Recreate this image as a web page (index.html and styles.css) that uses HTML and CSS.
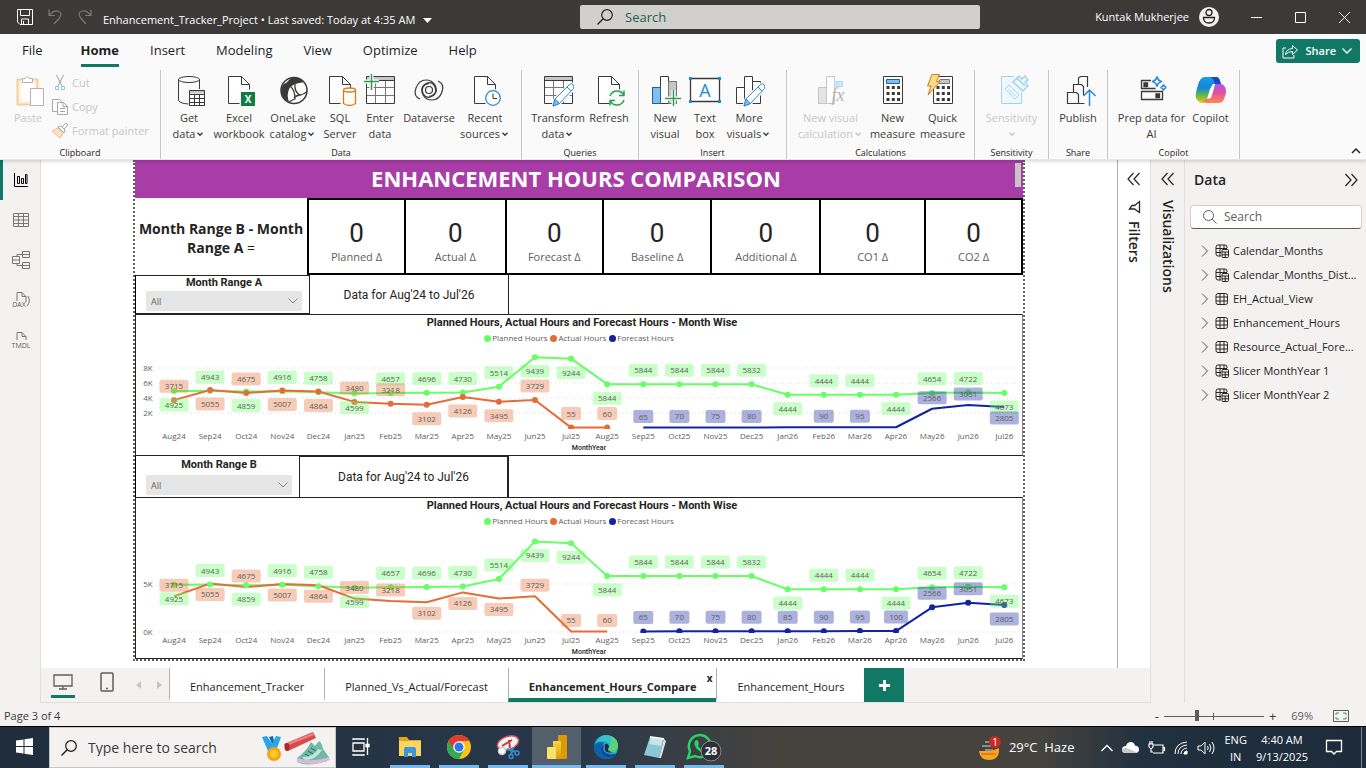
FILE: index.html
```html
<!DOCTYPE html>
<html lang="en">
<head>
<meta charset="utf-8">
<title>Enhancement_Tracker_Project</title>
<link rel="stylesheet" href="styles.css">
</head>
<body>
<svg class="defs" width="0" height="0" aria-hidden="true">
  <defs>
    <symbol id="page" viewBox="0 0 32 32"><path d="M5.500 28.500v-27h13l8 8v5M18.500 1.500v8h8M5.500 28.500h11" fill="#fff" stroke="currentColor"/></symbol>
    <symbol id="grid" viewBox="0 0 32 32"><path d="M2.500 1.500h28v27h-28z" fill="#fff"/><path d="M2.500 1.500h28v4h-28z" fill="#c8c6c4"/><path d="M2.500 12.500h28M2.500 20.500h28M11.500 5.500v23M21.500 5.500v23" stroke="#797775"/><path d="M2.500 1.500h28v27h-28zM2.500 5.500h28" fill="none" stroke="#3b3a39"/></symbol>
    <symbol id="pencil" viewBox="0 0 32 32"><path d="M11 31l2-7L27.500 9.500q2-1.500 4 .5t.5 4L17.500 28.500z" fill="#fff" stroke="#fff" stroke-width="3"/><path d="M11 31l2-7L27.500 9.500q2-1.500 3.500 0t.5 4L17.500 28.500z" fill="#fff" stroke="#2b88d8"/><path d="M11 31l2-7 4.500 4.500z" fill="#83beec" stroke="#2b88d8"/><path d="M25 12l4 4" stroke="#2b88d8"/></symbol>
    <symbol id="bars" viewBox="0 0 32 32"><path d="M3.500 12.500h8v16h-8zM19.500 6.500h8v22h-8z" fill="#fff" stroke="currentColor"/><path d="M11.500 1.500h8v27h-8z" fill="#fff" stroke="currentColor"/></symbol>
    <symbol id="calc" viewBox="0 0 32 32"><path d="M6.500 1.500h19v27h-19z" fill="#fff" stroke="#3b3a39"/><path d="M9.500 12.500h14M9.500 18.500h14M9.500 24.500h14" stroke="#3b3a39" stroke-width="3" stroke-dasharray="3 2.300"/></symbol>
    <symbol id="chev" viewBox="0 0 10 10"><path d="M2.500 3.800l2.500 2.500 2.500-2.500" fill="none" stroke="currentColor" stroke-width="1.400"/></symbol>
    <symbol id="lens" viewBox="0 0 18 18"><circle cx="11" cy="7" r="5.300" fill="none" stroke="currentColor" stroke-width="1.200"/><path d="M7.200 10.800L1.500 16.500" stroke="currentColor" stroke-width="1.300"/></symbol>
    <symbol id="table" viewBox="0 0 14 14"><rect x="1" y="1.500" width="11.500" height="11" rx="2" fill="none" stroke="#252423"/><path d="M1 5h11.500M1 9h11.500M5 1.500v11M9 1.500v11" stroke="#252423"/></symbol>
    <symbol id="calctable" viewBox="0 0 14 14"><path d="M6 12H3Q1 12 1 10V3q0-2 2-2h7q2 0 2 2v1M1 4.500h11M1 8.500h5M5 1v11M9 1v4" fill="none" stroke="#252423"/><rect x="7" y="5.500" width="6.500" height="8" rx="1" fill="#f3f2f1" stroke="#252423"/><path d="M7 8h6.500M7 10.800h6.500M10.200 8v5.500" stroke="#252423"/></symbol>
    <symbol id="go" viewBox="0 0 8 14"><path d="M1 1.500l5.500 5.500L1 12.500" fill="none" stroke="#605e5c"/></symbol>
    <symbol id="dblleft" viewBox="0 0 14 14"><path d="M6.500 1L1 7l5.500 6M12.500 1L7 7l5.500 6" fill="none" stroke="#252423" stroke-width="1.200"/></symbol>
    <linearGradient id="cpA" x1="0" y1="0" x2="0" y2="1"><stop offset="0" stop-color="#1a9bf0"/><stop offset=".4" stop-color="#1186d6"/><stop offset=".7" stop-color="#5fb84a"/><stop offset="1" stop-color="#f5c60b"/></linearGradient>
    <linearGradient id="cpB" x1="0" y1="0" x2="0" y2="1"><stop offset="0" stop-color="#9b5cf0"/><stop offset=".5" stop-color="#e4509c"/><stop offset="1" stop-color="#fb8a4c"/></linearGradient>
    <linearGradient id="edg" x1="0" y1="1" x2="1" y2="0"><stop offset="0" stop-color="#0c59a4"/><stop offset=".5" stop-color="#1b9de2"/><stop offset="1" stop-color="#5bd65a"/></linearGradient>
    <linearGradient id="pbi" x1="0" y1="0" x2="0" y2="1"><stop offset="0" stop-color="#f8d648"/><stop offset="1" stop-color="#dd9a06"/></linearGradient>
  </defs>
</svg>

<header class="titlebar">
  <div class="title-left">
    <button class="bare" aria-label="Save"><svg width="16" height="16" viewBox="0 0 16 16" fill="none" stroke="#fff"><path d="M.5.5h15v15H3l-2.500-2.500zM3.500.5v6h9v-6M4.500 15v-5h7v5M6.500 12v3"/></svg></button>
    <button class="bare" aria-label="Undo"><svg width="16" height="16" viewBox="0 0 16 16" fill="none" stroke="#7b7977" stroke-width="1.200"><path d="M2 .5v6h6M2.500 6Q7 .8 11.500 2.300T12 9.500L7 15"/></svg></button>
    <button class="bare" aria-label="Redo"><svg width="16" height="16" viewBox="0 0 16 16" fill="none" stroke="#7b7977" stroke-width="1.200"><path d="M14 .5v6H8M13.500 6Q9 .8 4.500 2.300T4 9.500L9 15"/></svg></button>
    <button class="bare doc-name">Enhancement_Tracker_Project • Last saved: Today at 4:35 AM <svg width="9" height="5" viewBox="0 0 9 5"><path d="M0 0h9L4.500 5z" fill="#fff"/></svg></button>
  </div>
  <label class="top-search"><svg width="18" height="18"><use href="#lens"/></svg><input type="text" placeholder="Search" aria-label="Search"></label>
  <div class="title-right">
    <button class="bare user">Kuntak Mukherjee <svg width="20" height="20" viewBox="0 0 20 20"><circle cx="10" cy="10" r="10" fill="#f3f2f1"/><circle cx="10" cy="5.500" r="3" fill="none" stroke="#201f1e" stroke-width="1.300"/><path d="M4.500 10.500h11q0 5.500-5.500 5.500t-5.500-5.500z" fill="none" stroke="#201f1e" stroke-width="1.300"/></svg></button>
    <button class="bare win" aria-label="Minimize"><svg width="11" height="11"><path d="M0 5.500h11" stroke="#fff"/></svg></button>
    <button class="bare win" aria-label="Maximize"><svg width="11" height="11"><path d="M.5.500h10v10H.5z" fill="none" stroke="#fff"/></svg></button>
    <button class="bare win" aria-label="Close"><svg width="11" height="11"><path d="M0 0l11 11M11 0L0 11" stroke="#fff"/></svg></button>
  </div>
</header>

<nav class="menubar">
  <button class="menu file">File</button><button class="menu current">Home</button><button class="menu">Insert</button><button class="menu">Modeling</button><button class="menu">View</button><button class="menu">Optimize</button><button class="menu">Help</button>
  <button class="share"><svg width="17" height="15" viewBox="0 0 17 15" fill="none" stroke="#fff"><path d="M4 4H1v10h11v-3M3.500 10.500Q4 5 10.500 4.500v-3l5 4.500-5 4.500v-3Q6 7.500 3.500 10.500z"/></svg>Share<svg width="10" height="6" viewBox="0 0 10 6"><path d="M.5.5L5 5 9.500.5" fill="none" stroke="#fff" stroke-width="1.300"/></svg></button>
</nav>

<section class="ribbon" aria-label="Home ribbon">
  <div class="group">
    <div class="tools clip">
      <button class="tool s36 off"><svg class="ic" viewBox="0 0 32 32" fill="none"><path d="M5.500 4.500h20v25h-20z" fill="#fdf3dd" stroke="#f3cf9d" stroke-width="2"/><path d="M9 8h13v18H9z" fill="#fff"/><path d="M10.500 7.500v-4h3q2-4 4 0h3v4z" fill="#fff" stroke="#b5b3b1"/><path d="M18.500 13.500h13v17h-13z" fill="#fff" stroke="#b5b3b1"/></svg><span>Paste</span></button>
      <div class="small-tools">
        <button class="mini"><svg width="16" height="16" viewBox="0 0 16 16" fill="none"><path d="M4.500 0l5.500 11M11.500 0L6 11" stroke="#a19f9d"/><path d="M3.500 11.500h3v3h-3zM9.500 11.500h3v3h-3z" stroke="#8ec5e8"/></svg>Cut</button>
        <button class="mini"><svg width="16" height="16" viewBox="0 0 16 16" fill="#fff" stroke="#a9a7a5"><path d="M.5.500h7l2 2v10h-9z"/><path d="M5.500 3.500h6l4 4v8h-10zM11 3.500v4h4M8 9.500h5M8 12.500h5"/></svg>Copy</button>
        <button class="mini"><svg width="16" height="16" viewBox="0 0 16 16"><path d="M0 8l6-3 5 5-3 5z" fill="#fbe3c8" stroke="#efbd8c"/><path d="M6 4l6 6 1-3-4-4zM10 4l4-4 2 2-4 4" fill="#fff" stroke="#a9a7a5"/></svg>Format painter</button>
      </div>
    </div>
    <div class="group-name">Clipboard</div>
  </div>
  <div class="group">
    <div class="tools lead">
      <button class="tool s50"><svg class="ic" viewBox="0 0 32 32" fill="none" stroke="#3b3a39"><path d="M5.500 4v21.500q2 3 10 3.500M26.500 4v10" /><ellipse cx="16" cy="4.500" rx="10.500" ry="3"/><path d="M16.500 15.500h15v15h-15z" fill="#fff"/><path d="M16.500 17h15" stroke-width="3" stroke="#c8c6c4"/><path d="M16.500 19.500h15M16.500 23.500h15M16.500 27.500h15M21.500 19v12M26.500 19v12M16.500 15.500h15v15h-15z"/></svg><span>Get<br>data<svg class="cv"><use href="#chev"/></svg></span></button>
      <button class="tool s50"><svg class="ic" viewBox="0 0 32 32"><use href="#page"/><path d="M18 17h14v14H18z" fill="#107c41"/><text x="25" y="28" class="xl">X</text></svg><span>Excel<br>workbook</span></button>
      <button class="tool s58"><svg class="ic" viewBox="0 0 32 32"><circle cx="17" cy="15.500" r="13" fill="#fff" stroke="#3b3a39" stroke-width="1.500"/><path d="M14 3l8 0 5 4-9 2-5 3q-4 8-1 15Q4 24 4 15 5 9 9 8z" fill="#3b3a39"/><path d="M13 11q5 4 5 13-3 1-6 3M18 9q-1 8 5 11-5 1-6 3M23 20q5-1 7-4" fill="none" stroke="#3b3a39" stroke-width="1.300"/></svg><span>OneLake<br>catalog<svg class="cv"><use href="#chev"/></svg></span></button>
      <button class="tool s36"><svg class="ic" viewBox="0 0 32 32"><use href="#page"/><path d="M19.500 15v13.500q6 4 12 0V15" fill="#fff" stroke="#d87a16" stroke-width="1.300"/><ellipse cx="25.500" cy="15" rx="6" ry="2" fill="#fff" stroke="#d87a16" stroke-width="1.300"/></svg><span>SQL<br>Server</span></button>
      <button class="tool s44"><svg class="ic" viewBox="0 0 32 32"><use href="#grid"/><path d="M0 6.500h15M7.500-1v16" stroke="#fff" stroke-width="4"/><path d="M0 6.500h15M7.500-1v16" stroke="#2f9e4f" stroke-width="1.500"/></svg><span>Enter<br>data</span></button>
      <button class="tool s54"><svg class="ic" viewBox="0 0 32 32" fill="none" stroke="#3b3a39" stroke-width="1.200"><circle cx="16" cy="15" r="3.500"/><path d="M7 24Q0 21 3 13 6 5 13 5q6 0 9 5 3 6-1 10-5 4-9 1-4-4-2-9 2-3 6-3.500"/><path d="M25 6q7 3 4 11-3 8-10 8-6 0-9-5-3-6 1-10 5-4 9-1 4 4 2 9-2 3-6 3.500"/></svg><span>Dataverse</span></button>
      <button class="tool s58"><svg class="ic" viewBox="0 0 32 32"><use href="#page"/><circle cx="24" cy="23" r="9" fill="#fafafa"/><circle cx="24" cy="23" r="7.300" fill="#fff" stroke="#2b88d8" stroke-width="1.300"/><path d="M24 18.500v5h4" fill="none" stroke="#3b3a39"/></svg><span>Recent<br>sources<svg class="cv"><use href="#chev"/></svg></span></button>
    </div>
    <div class="group-name">Data</div>
  </div>
  <div class="group">
    <div class="tools">
      <button class="tool s58"><svg class="ic" viewBox="0 0 32 32"><use href="#grid"/><use href="#pencil"/></svg><span>Transform<br>data<svg class="cv"><use href="#chev"/></svg></span></button>
      <button class="tool s44"><svg class="ic" viewBox="0 0 32 32"><use href="#page"/><circle cx="24" cy="23" r="9" fill="#fafafa"/><path d="M17 21q2-5 7-5 5 0 6.500 4M31 15.500v5h-5M31 25q-2 5-7 5-5 0-6.500-4M17 30.500v-5h5" fill="none" stroke="#2f9e4f" stroke-width="1.500"/></svg><span>Refresh</span></button>
    </div>
    <div class="group-name">Queries</div>
  </div>
  <div class="group">
    <div class="tools lead wider">
      <button class="tool s36"><svg class="ic" viewBox="0 0 32 32"><use href="#bars"/><path d="M3.500 12.500h8v16h-8z" fill="#83beec" stroke="#1664a7"/><path d="M19.500 6.500h8v22h-8z" fill="#c8c6c4" stroke="#797775"/><path d="M16 23.500h16M24.500 15v16" stroke="#fff" stroke-width="4"/><path d="M16 23.500h16M24.500 15v16" stroke="#2f9e4f" stroke-width="1.500"/></svg><span>New<br>visual</span></button>
      <button class="tool s44"><svg class="ic" viewBox="0 0 32 32"><path d="M1.500 3.500h29v23h-29z" fill="#fff" stroke="#3b3a39" stroke-width="1.300"/><path d="M0 2h3v3H0zM29 2h3v3h-3zM0 25h3v3H0zM29 25h3v3h-3z" fill="#1e88d2"/><text x="16" y="22" class="tb">A</text></svg><span>Text<br>box</span></button>
      <button class="tool s44"><svg class="ic" viewBox="0 0 32 32"><use href="#bars"/><use href="#pencil"/></svg><span>More<br>visuals<svg class="cv"><use href="#chev"/></svg></span></button>
    </div>
    <div class="group-name">Insert</div>
  </div>
  <div class="group">
    <div class="tools">
      <button class="tool s70 off"><svg class="ic" viewBox="0 0 32 32"><use href="#bars"/><path d="M3.500 12.500h8v16h-8z" fill="#e6e4e2" stroke="#c8c6c4"/><path d="M19.500 6.500h8v5h-8z" fill="#cde6f7" stroke="#b5d9f0"/><path d="M20 12h10v18H20z" fill="#fafafa"/><text x="23" y="26" class="fx">fx</text></svg><span>New visual<br>calculation<svg class="cv"><use href="#chev"/></svg></span></button>
      <button class="tool s50"><svg class="ic" viewBox="0 0 32 32"><use href="#calc"/><path d="M9.500 4.500h13v4h-13z" fill="#83beec" stroke="#1664a7"/></svg><span>New<br>measure</span></button>
      <button class="tool s50"><svg class="ic" viewBox="0 0 32 32"><use href="#calc"/><path d="M13 4.500h9.500v4H11z" fill="#c8c6c4" stroke="#797775"/><path d="M5-.5h7.500l-3 7H13L1 20l3-9H.5z" fill="#fbd98d" stroke="#d87a16"/></svg><span>Quick<br>measure</span></button>
    </div>
    <div class="group-name">Calculations</div>
  </div>
  <div class="group">
    <div class="tools">
      <button class="tool s58 off"><svg class="ic" viewBox="0 0 32 32" fill="#eef7fc" stroke="#a6d2ea"><path d="M18 1.500H5.500v27h20V17"/><path d="M9 14l4-4 10 10-4 4zM12.500 14l7 7"/><path d="M17 7l6-6 3 3 3-3 3 4-3 2 3 4-5 5zM21 3l8 8" stroke-width="1.500"/></svg><span>Sensitivity<br><svg class="cv"><use href="#chev"/></svg></span></button>
    </div>
    <div class="group-name">Sensitivity</div>
  </div>
  <div class="group">
    <div class="tools">
      <button class="tool s44"><svg class="ic" viewBox="0 0 32 32" fill="none" stroke="#3b3a39" stroke-width="1.200"><path d="M6.500 17.500h8l2 2v9h-11v-11zM11.500 17V9.500h8l2 2V20M16.500 9V3l2-1.500h7V12M16.500 28.500h6"/><path d="M27.500 31V15M21.500 21l6-6 6 6" stroke="#2b88d8" stroke-width="1.500"/></svg><span>Publish</span></button>
    </div>
    <div class="group-name">Share</div>
  </div>
  <div class="group">
    <div class="tools">
      <button class="tool s70"><svg class="ic" viewBox="0 0 32 32" fill="none" stroke="#3b3a39" stroke-width="1.300"><path d="M15 5.500H5.500v8h14M5.500 16.500h21v8h-21z"/><path d="M8 8h3.500v3.500H8zM20 19h3.500v3.500H20z" fill="#3b3a39"/><path d="M21 1.500q1 4.500 5 5-4 .5-5 5-1-4.500-5-5 4-.5 5-5zM27.500 9.500q.5 2.500 3 3-2.500.5-3 3-.5-2.500-3-3 2.500-.5 3-3z" stroke="#2b88d8" stroke-width="1.500"/></svg><span>Prep data for<br>AI</span></button>
      <button class="tool s44"><svg class="ic" viewBox="0 0 32 32"><path d="M21 2q3 0 4 4l1 3h-6q-3 0-4 4l-3 10q-1 5-5 5-5 0-7-5Q0 19 3 10 5 2 10 2z" fill="url(#cpA)"/><path d="M11 28q-2 0-3-3 5 0 6-5l3-9q1-3 4-3 9 0 10 7 .5 4-2 9-1 4-6 4z" fill="url(#cpB)"/><path d="M16 2h5q3 0 4 4l1 3h-6l-2-5z" fill="#1a47c8"/><path d="M15 14l3-5 2 0-2 8-2 6-4 1z" fill="#fff"/></svg><span>Copilot</span></button>
    </div>
    <div class="group-name">Copilot</div>
  </div>
  <button class="bare collapse" aria-label="Collapse ribbon"><svg width="10" height="6" viewBox="0 0 10 6"><path d="M1 5l4-4 4 4" fill="none" stroke="#252423" stroke-width="1.500"/></svg></button>
</section>

<main class="workspace">
  <nav class="views">
    <button class="view on" aria-label="Report view"><svg width="16" height="16" viewBox="0 0 16 16" fill="none" stroke="#000"><path d="M1.500 1v13.500H15M4.500 4.500h2v7h-2zM8.500 6.500h2v5h-2zM12.500 2.500h1.500v9h-1.500z"/></svg></button>
    <button class="view" aria-label="Table view"><svg width="16" height="16" viewBox="0 0 16 16" fill="none" stroke="#797775"><path d="M.5 1.500h15v13H.5zM.5 4.500h15M.5 8h15M.5 11.500h15M5.500 1.500v13M10.500 1.500v13"/></svg></button>
    <button class="view" aria-label="Model view"><svg width="18" height="18" viewBox="0 0 18 18" fill="none" stroke="#797775"><path d="M.5 5.500h7v7h-7zM.5 9h7M10.500.5h7v6h-7zM10.500 3.500h7M10.500 11.500h7v6h-7zM10.500 14.500h7M5 5.500v-2h5.500M5 12.500v2h5.500"/></svg></button>
    <button class="view" aria-label="DAX query view"><svg width="20" height="18" viewBox="0 0 20 18" fill="none" stroke="#797775"><path d="M6 10V1.500h5l4 4V11M11 1.500v4h4M17 5q3 5-1 10"/><text x="8" y="16" class="nav-t">DAX</text></svg></button>
    <button class="view" aria-label="TMDL view"><svg width="20" height="18" viewBox="0 0 20 18" fill="none" stroke="#797775"><path d="M6 9V1.500h5l4 4V9M11 1.500v4h4"/><text x="10" y="17" class="nav-t">TMDL</text></svg></button>
  </nav>

  <div class="center">
    <div class="stage">
      <div class="canvas">
        <article class="report">
          <h1 class="banner">ENHANCEMENT HOURS COMPARISON<span class="thumb"></span></h1>
          <div class="cards">
            <p class="cards-title">Month Range B - Month Range A <span class="eq">=</span></p>
            <div class="card c96"><b>0</b><span>Planned Δ</span></div>
            <div class="card c100"><b>0</b><span>Actual Δ</span></div>
            <div class="card c96"><b>0</b><span>Forecast Δ</span></div>
            <div class="card c108"><b>0</b><span>Baseline Δ</span></div>
            <div class="card c108"><b>0</b><span>Additional Δ</span></div>
            <div class="card c104"><b>0</b><span>CO1 Δ</span></div>
            <div class="card c96"><b>0</b><span>CO2 Δ</span></div>
          </div>
          <div class="slicers">
            <div class="slicer"><label for="ra">Month Range A</label><span class="pick"><select id="ra"><option>All</option></select><svg width="10" height="6" viewBox="0 0 10 6"><path d="M.5.5L5 5 9.500.5" fill="none" stroke="#8a8886"/></svg></span></div>
            <p class="range">Data for Aug'24 to Jul'26</p>
          </div>
          <figure class="chart">
            <figcaption>Planned Hours, Actual Hours and Forecast Hours - Month Wise</figcaption>
            <div class="legend"><span class="k planned">Planned Hours</span><span class="k actual">Actual Hours</span><span class="k forecast">Forecast Hours</span></div>
            <svg class="plot" id="plotA" viewBox="0 0 886 110"></svg>
          </figure>
          <div class="slicers tall">
            <div class="slicer"><label for="rb">Month Range B</label><span class="pick"><select id="rb"><option>All</option></select><svg width="10" height="6" viewBox="0 0 10 6"><path d="M.5.5L5 5 9.500.5" fill="none" stroke="#8a8886"/></svg></span></div>
            <p class="range">Data for Aug'24 to Jul'26</p>
          </div>
          <figure class="chart">
            <figcaption>Planned Hours, Actual Hours and Forecast Hours - Month Wise</figcaption>
            <div class="legend"><span class="k planned">Planned Hours</span><span class="k actual">Actual Hours</span><span class="k forecast">Forecast Hours</span></div>
            <svg class="plot" id="plotB" viewBox="0 0 886 130"></svg>
          </figure>
        </article>
      </div>
      <aside class="rail filters">
        <button class="bare" aria-label="Expand filters"><svg width="14" height="14"><use href="#dblleft"/></svg></button>
        <svg class="funnel" width="13" height="12" viewBox="0 0 13 12"><path d="M11.500.5v11L6.500 8H1.500L4 4.500H6.500z" fill="none" stroke="#252423" stroke-width="1.300"/></svg>
        <h2>Filters</h2>
      </aside>
    </div>
    <div class="pages">
      <button class="device on" aria-label="Desktop layout"><svg width="20" height="16" viewBox="0 0 20 16" fill="none" stroke="#605e5c" stroke-width="1.300"><path d="M1 1h18v11H1zM10 12v3M6 15h8"/></svg></button>
      <button class="device" aria-label="Mobile layout"><svg width="14" height="20" viewBox="0 0 14 20" fill="none" stroke="#605e5c" stroke-width="1.500"><rect x="1" y="1" width="12" height="18" rx="1"/><path d="M6 16.500h2"/></svg></button>
      <button class="bare step" aria-label="Previous"><svg width="6" height="8"><path d="M5 0v8L0 4z" fill="#c8c6c4"/></svg></button>
      <button class="bare step" aria-label="Next"><svg width="6" height="8"><path d="M1 0v8l5-4z" fill="#c8c6c4"/></svg></button>
      <button class="tab">Enhancement_Tracker</button>
      <button class="tab">Planned_Vs_Actual/Forecast</button>
      <button class="tab active">Enhancement_Hours_Compare<span class="x">x</span></button>
      <button class="tab">Enhancement_Hours</button>
      <button class="add" aria-label="New page"><svg width="11" height="11"><path d="M5.500 0v11M0 5.500h11" stroke="#fff" stroke-width="3"/></svg></button>
    </div>
  </div>

  <aside class="rail visuals">
    <button class="bare" aria-label="Expand visualizations"><svg width="14" height="14"><use href="#dblleft"/></svg></button>
    <h2>Visualizations</h2>
  </aside>

  <aside class="data">
    <div class="data-head"><h2>Data</h2><button class="bare" aria-label="Collapse data"><svg width="14" height="14" class="flip"><use href="#dblleft"/></svg></button></div>
    <label class="data-search"><svg width="16" height="16" viewBox="0 0 16 16" fill="none" stroke="#605e5c"><circle cx="6.500" cy="6.500" r="5"/><path d="M10 10l4.500 4.500"/></svg><input type="text" placeholder="Search" aria-label="Search data"></label>
    <ul class="tree">
      <li><svg width="8" height="14"><use href="#go"/></svg><svg width="14" height="14"><use href="#calctable"/></svg>Calendar_Months</li>
      <li><svg width="8" height="14"><use href="#go"/></svg><svg width="14" height="14"><use href="#calctable"/></svg>Calendar_Months_Dist...</li>
      <li><svg width="8" height="14"><use href="#go"/></svg><svg width="14" height="14"><use href="#table"/></svg>EH_Actual_View</li>
      <li><svg width="8" height="14"><use href="#go"/></svg><svg width="14" height="14"><use href="#table"/></svg>Enhancement_Hours</li>
      <li><svg width="8" height="14"><use href="#go"/></svg><svg width="14" height="14"><use href="#table"/></svg>Resource_Actual_Fore...</li>
      <li><svg width="8" height="14"><use href="#go"/></svg><svg width="14" height="14"><use href="#calctable"/></svg>Slicer MonthYear 1</li>
      <li><svg width="8" height="14"><use href="#go"/></svg><svg width="14" height="14"><use href="#calctable"/></svg>Slicer MonthYear 2</li>
    </ul>
  </aside>
</main>

<footer class="status">
  <span>Page 3 of 4</span>
  <div class="zoom">
    <button class="bare">-</button><input type="range" min="0" max="100" value="32" aria-label="Zoom"><button class="bare">+</button><span class="pct">69%</span>
    <button class="bare" aria-label="Fit to page"><svg width="16" height="12" viewBox="0 0 16 12" fill="none"><path d="M.5.5h15v11H.5z" stroke="#605e5c"/><path d="M3 5V3h3M10 3h3v2M13 7v2h-3M6 9H3V7" stroke="#4b9a4b"/></svg></button>
  </div>
</footer>

<div class="taskbar">
  <button class="slot" aria-label="Start"><svg width="17" height="17" viewBox="0 0 17 17" fill="#fff"><path d="M0 2.500L7.500 1.500V8H0zM8.500 1.300L17 0v8H8.500zM0 9h7.500v6.500L0 14.500zM8.500 9H17v8l-8.500-1.300z"/></svg></button>
  <label class="task-search"><svg width="18" height="18"><use href="#lens"/></svg><input type="text" placeholder="Type here to search" aria-label="Type here to search">
    <svg width="70" height="34" viewBox="0 0 70 34"><path d="M1 6l5-1 5 8 4-8 5 1-5 14H7z" fill="#2aa5ea"/><path d="M8 6l3 7 2-3-1-5z" fill="#0b6fc0"/><circle cx="13" cy="23" r="7" fill="#f6a50d"/><circle cx="13" cy="23" r="4" fill="#fcc736"/><path d="M23 13L52 1l3 6-28 13z" fill="#d94a49"/><path d="M24 13l28-11 1 2-28 11z" fill="#ef8583"/><ellipse cx="26" cy="16" rx="2.500" ry="4" fill="#a62c33"/><path d="M36 27q9-6 14-16l4 4 4-5q3 2 4 8l6 8q1 5-7 5-14 5-25 0z" fill="#6db9a6"/><path d="M41 26q10 1 16-8l4 1q-6 10-17 10z" fill="#c5e5dc"/><path d="M50 17l5 3M47 20l5 3M44 23l4 2" stroke="#2b6b62"/><path d="M36 27q14 5 32-1l1 3q-15 7-33 2z" fill="#dcb8dd"/></svg>
  </label>
  <button class="slot" aria-label="Task view"><svg width="18" height="18" viewBox="0 0 18 18" fill="none" stroke="#fff" stroke-width="1.300"><path d="M1 5h11v8H1zM1 2V1h11v1M1 16v1h11v-1M15.500 0v6M15.500 9v8"/><path d="M14 6.500h3v2h-3z" fill="#fff"/></svg></button>
  <button class="slot open" aria-label="File Explorer"><svg width="24" height="22" viewBox="0 0 24 22"><path d="M1 1h8l2 3h12v16H1z" fill="#e8a317"/><path d="M1 5h22v15H1z" fill="#fcd462"/><path d="M6 21v-8q0-2 2-2h8q2 0 2 2v8h-4v-4h-4v4z" fill="#3a96dd"/></svg></button>
  <button class="slot open" aria-label="Chrome"><svg width="24" height="24" viewBox="0 0 24 24"><circle cx="12" cy="12" r="12" fill="#fbc116"/><path d="M12 12L1.600 6A12 12 0 0 0 12 24l5-9z" fill="#34a853"/><path d="M1.600 6A12 12 0 0 1 22.400 6H12v6H5z" fill="#e33b2e"/><circle cx="12" cy="12" r="5.800" fill="#fff"/><circle cx="12" cy="12" r="4.500" fill="#3374e8"/></svg></button>
  <button class="slot open" aria-label="Snipping Tool"><svg width="24" height="24" viewBox="0 0 24 24"><ellipse cx="12" cy="8" rx="11" ry="6.500" transform="rotate(-20 12 8)" fill="#f0f0f2" stroke="#d05156" stroke-width="1.500"/><path d="M6 11l10-6M13 5l1 8" stroke="#c53b40" stroke-width="2"/><circle cx="6" cy="16" r="3.500" fill="#fff" stroke="#c7cdd3" stroke-width="1.500"/><path d="M11 14l9 3M17 13l-2 7" stroke="#2d8fd5" stroke-width="2"/><circle cx="21" cy="18" r="2" fill="none" stroke="#2d8fd5" stroke-width="1.500"/><circle cx="15" cy="21.500" r="2" fill="none" stroke="#2d8fd5" stroke-width="1.500"/></svg></button>
  <button class="slot open focus" aria-label="Power BI"><svg width="20" height="24" viewBox="0 0 20 24"><path d="M11 0h8q1 0 1 1v22q0 1-1 1h-8z" fill="#dd9a06"/><path d="M6 6h7q1 0 1 1v17H6z" fill="url(#pbi)"/><path d="M1 12h7q1 0 1 1v11H1q-1 0-1-1V13q0-1 1-1z" fill="#fbe36b"/></svg></button>
  <button class="slot open" aria-label="Edge"><svg width="24" height="24" viewBox="0 0 24 24"><circle cx="12" cy="12" r="12" fill="url(#edg)"/><path d="M0 11Q4 5 10 8q-3 3-1 8 3 5 12 4-4 4-9 4Q1 23 0 11z" fill="#0f5fb0"/><path d="M11 9q-4 5 0 9 4 3 10 1 1 0 0 1-7 4-12-1-4-6 2-10z" fill="#0a3f7d"/><path d="M14 10q1 4-1 6 3 3 8 1l3-5v-2l-5-5z" fill="#5cd27a"/><path d="M11 9q3-1 4 2 0 2-1 3 0 3 5 3-8 2-8-4 0-2 0-4z" fill="#1e2c3b"/><path d="M1 9Q5 0 13 0q9 1 11 9 0 7-7 7-4-1-2-3 2-6-5-7-6 0-9 3z" fill="#38c0cf"/><path d="M17 1q7 3 7 10-1 5-7 5-4-1-2-3 3-5 2-12z" fill="#5cd27a"/></svg></button>
  <button class="slot open" aria-label="Notepad"><svg width="24" height="24" viewBox="0 0 24 24"><path d="M7 2l14 2-5 19-15-3z" fill="#8cc6d8"/><path d="M8 2l12 2-2 7-12-2z" fill="#c4e6ee"/><path d="M21 4l2 2-5 17-2 0z" fill="#e3e3e3"/><path d="M7 2l14 2" stroke="#f3f3f3" stroke-width="2"/></svg></button>
  <button class="slot open" aria-label="WhatsApp"><svg width="36" height="28" viewBox="0 0 36 28"><path d="M2 25l2-7a11 11 0 1 1 5 5z" fill="none" stroke="#28d366" stroke-width="2.500"/><path d="M9 8q2-2 3 0l1 3-1 2q2 3 5 4l2-2 3 2q1 2-2 3-4 1-9-4-4-5-2-8z" fill="#28d366"/><circle cx="25" cy="18" r="10" fill="#2c3138" stroke="#85888c"/><text x="25" y="22" class="badge">28</text></svg></button>
  <div class="tray">
    <button class="bare weather"><svg width="26" height="24" viewBox="0 0 26 24"><path d="M8 6h10M5 10h10M8 14h8" stroke="#8b8b8b" stroke-width="2"/><path d="M2 15h12l8-3q1 12-10 12-9 0-10-9z" fill="#f7a325"/><path d="M4 18h15" stroke="#d97a0a" stroke-width="1.500"/><circle cx="18" cy="6" r="6" fill="#c62a22"/><text x="18" y="10" class="one">1</text></svg><span>29°C&nbsp; Haze</span></button>
    <svg width="12" height="8"><path d="M.5 7L6 1.500 11.500 7" fill="none" stroke="#fff" stroke-width="1.300"/></svg>
    <svg width="17" height="12" viewBox="0 0 17 12"><path d="M4 11q-4 0-4-3.500T4 4q1-4 5-4 3 0 4 3.500 4 .5 4 4T13 11z" fill="#fff"/><path d="M4 11q-4 0-4-3.500 3-3 6-1l9 4-2 .5z" fill="#c8c8c8"/></svg>
    <svg width="17" height="14" viewBox="0 0 17 14" fill="none" stroke="#fff" stroke-width="1.200"><path d="M6 4h9v8H5M15 6.500h1.500v3H15M1 3v3q2 3 4 0V3zM2 3V0M4 3V0M3 8v3h2"/></svg>
    <svg width="14" height="14" viewBox="0 0 14 14" fill="none" stroke="#fff"><path d="M1 13Q1 2 13 1M4 13q0-8 9-9M7 13q0-5 6-6M10 13q0-2 3-3" /><path d="M10 13q0-3 3-3v3z" fill="#fff"/></svg>
    <svg width="18" height="14" viewBox="0 0 18 14" fill="none" stroke="#fff"><path d="M1 5h3l4-4v12L4 9H1zM10.500 5q1.500 2 0 4M12.500 3q3 4 0 8M15 1q4 6 0 12"/></svg>
    <span class="two">ENG<br>IN</span>
    <span class="two">4:40 AM<br>9/13/2025</span>
    <svg width="17" height="17" viewBox="0 0 17 17"><path d="M.5 1.500h15v11h-5L8 15l-2.500-2.500h-5z" fill="none" stroke="#fff" stroke-width="1.300"/></svg>
    <span class="peek"></span>
  </div>
</div>
<script src="charts.js"></script>
</body>
</html>
```

FILE: styles.css
```css
* { box-sizing: border-box; }
body {
  margin: 0; height: 100vh; overflow: hidden;
  display: grid; grid-template-rows: 34px 34px 92px minmax(0, 1fr) 24px 41px;
  font: 12px/16px "Open Sans", "Noto Sans", sans-serif; color: #252423; background: #fff;
}
button, input, select { font: inherit; color: inherit; border: 0; padding: 0; margin: 0; background: none; outline: 0; }
h1, h2, p, ul, figure { margin: 0; padding: 0; }
svg { flex: none; display: block; overflow: visible; }
.defs { position: absolute; }
.bare { display: flex; align-items: center; }

.titlebar { display: grid; grid-template-columns: 290fr 200fr 193fr; background: #3b3a39; color: #fff; }
.title-left { display: flex; align-items: center; padding-left: 17px; gap: 14px; }
.doc-name { gap: 8px; margin-left: -4px; padding-top: 6px; white-space: nowrap; font-size: 11px; }
.top-search { display: flex; align-items: center; margin: 5px 0; background: #d2d0ce; border-radius: 2px; padding-left: 16px; gap: 11px; color: #252423; }
.top-search input { flex: 1; min-width: 0; font-size: 13px; }
.top-search input::placeholder { color: #1f5f52; opacity: 1; }
.title-right { display: flex; justify-content: flex-end; align-items: center; }
.user { gap: 10px; margin-right: 15px; font-size: 11px; }
.win { width: 44px; height: 34px; justify-content: center; }

.menubar { display: flex; align-items: center; gap: 31px; padding: 0 6px 0 22px; background: #fafafa; }
.menu { font-size: 13px; height: 32px; border-bottom: 3px solid transparent; color: #201f1e; }
.menu.file { margin-right: 7px; }
.menu.current { font-weight: 700; border-color: #117865; }
.share { margin-left: auto; display: flex; align-items: center; gap: 6px; height: 24px; padding: 0 8px 0 6px; border-radius: 3px; background: #117865; color: #fff; font-size: 11px; font-weight: 600; }

.ribbon { display: grid; grid-template-columns: 161px 361px 117px 148px 188px 74px 59px 132px 1fr; background: #fafafa; padding-top: 2px; border-bottom: 1px solid #e8e6e4; position: relative; box-shadow: 0 2px 3px #00000022; z-index: 1; }
.group { display: flex; flex-direction: column; border-right: 1px solid #c8c6c4; }
.tools { flex: 1; display: flex; justify-content: center; }
.tools.clip { justify-content: flex-start; padding-left: 10px; gap: 6px; }
.tools.lead { justify-content: flex-start; padding-left: 3px; }
.tools.wider { padding-left: 8px; }
.group-name { font-size: 9px; line-height: 12px; text-align: center; }
.tool { display: flex; flex-direction: column; align-items: center; padding-top: 5px; gap: 3px; font-size: 11px; line-height: 16px; white-space: nowrap; color: #3b3a39; }
.tool > span { display: block; width: max-content; }
.ic { width: 32px; height: 32px; }
.cv { display: inline-block; width: 10px; height: 10px; vertical-align: -1px; }
.s36 { width: 36px; } .s44 { width: 44px; } .s50 { width: 50px; } .s54 { width: 54px; } .s58 { width: 58px; } .s70 { width: 74px; }
.tool.off { color: #c8c6c4; }
.small-tools { display: flex; flex-direction: column; padding-top: 1px; }
.mini { display: flex; align-items: center; gap: 4px; height: 24px; color: #c8c6c4; white-space: nowrap; font-size: 11px; }
.xl { font: bold 10px "Open Sans", sans-serif; fill: #fff; text-anchor: middle; }
.tb { font: 18px "Open Sans", sans-serif; fill: #1e88d2; text-anchor: middle; }
.fx { font: italic 18px "Liberation Serif", serif; fill: #b5b3b1; text-anchor: middle; }
.collapse { justify-self: end; align-self: end; padding: 5px; }

.workspace { display: flex; min-height: 0; }
.views { width: 41px; background: #f3f2f1; border-right: 1px solid #e1dfdd; }
.view { display: flex; align-items: center; justify-content: center; width: 40px; height: 40px; border-left: 3px solid transparent; padding-right: 2px; }
.view.on { border-color: #117865; }
.nav-t { font: 7px "Open Sans", sans-serif; fill: #605e5c; stroke: none; text-anchor: middle; }
.center { flex: 1; min-width: 0; display: flex; flex-direction: column; }
.stage { flex: 1; min-height: 0; display: flex; }
.canvas { flex: 1; min-width: 0; display: flex; justify-content: center; align-items: flex-start; background: #fff; overflow: hidden; }
.report { width: 83%; max-width: 892px; min-width: 600px; border: 2px dotted #605e5c; border-top: 0; }
.banner { position: relative; height: 38px; background: #a83da8; color: #fff; text-align: center; font-size: 22px; line-height: 36px; font-weight: 700; padding-right: 6px; }
.thumb { position: absolute; right: 2px; top: 3px; width: 6px; height: 24px; background: #c8c6c4; }
.cards { display: flex; height: 77px; }
.cards-title { flex: 174 1 0; align-self: center; text-align: center; font-weight: 700; font-size: 14px; line-height: 19px; padding-top: 2px; }
.eq { font-weight: 400; }
.card { display: flex; flex-direction: column; align-items: center; justify-content: center; border: solid #000; border-width: 2px 2px 2px 0; padding-top: 10px; }
.card:nth-child(2) { border-left-width: 2px; }
.card b { font: 26px/30px Roboto, sans-serif; }
.card span { font-size: 11px; line-height: 18px; color: #605e5c; }
.c96 { flex: 96 1 0; } .c100 { flex: 100 1 0; } .c104 { flex: 104 1 0; } .c108 { flex: 108 1 0; }
.slicers { display: grid; grid-template-columns: 174fr 199fr 514fr; height: 39px; border-left: 1px solid #000; }
.slicers.tall { grid-template-columns: 164fr 209fr 514fr; height: 41px; }
.slicer { display: flex; flex-direction: column; align-items: center; gap: 1px; border: solid #252423; border-width: 1px 1px 2px 0; font: bold 11px/14px Roboto, sans-serif; padding: 0 7px 0 10px; }
.tall .slicer { border-width: 0 1px 0 0; gap: 3px; padding-top: 2px; }
.pick { display: grid; align-self: stretch; align-items: center; background: #e6e6e6; height: 20px; }
.pick select { grid-area: 1 / 1; appearance: none; width: 100%; height: 20px; padding-left: 5px; font: 9px "Open Sans", sans-serif; color: #605e5c; }
.pick svg { grid-area: 1 / 1; justify-self: end; margin-right: 4px; pointer-events: none; }
.range { border-right: 1px solid #252423; text-align: center; font: 12px/40px Roboto, sans-serif; }
.tall .range { border: solid #252423; border-width: 1px 2px 1px 0; }
.chart { border: 1px solid #252423; border-right-color: #8a8886; }
.chart figcaption { text-align: center; font: bold 11px/16px Roboto, sans-serif; padding-left: 6px; }
.legend { display: flex; justify-content: center; gap: 3px; font-size: 8px; line-height: 14px; color: #605e5c; }
.k { display: flex; align-items: center; gap: 1px; }
.k::before { content: ""; width: 7px; height: 7px; border-radius: 50%; background: var(--c); }
.planned { --c: #66ff66; } .actual { --c: #e66c37; } .forecast { --c: #12239e; }
.plot { width: 100%; height: auto; }
.plot text { font: 8px "Open Sans", sans-serif; fill: #605e5c; text-anchor: middle; }
.plot .axis { font: 500 7px Roboto, sans-serif; fill: #252423; }
.gridline { stroke: #dddbd9; stroke-dasharray: 1 3; }
.series { fill: none; stroke: var(--c); stroke-width: 2; stroke-linejoin: round; }
.dot { fill: var(--c); }
.pill { fill: var(--c); opacity: .35; }

.rail { display: flex; flex-direction: column; align-items: center; padding-top: 12px; }
.rail h2 { writing-mode: vertical-rl; font-size: 14px; line-height: 18px; font-weight: 600; }
.filters { width: 33px; border-left: 1px solid #b3b0ad; gap: 15px; }
.filters h2 { margin-top: -7px; }
.visuals { width: 35px; background: #f3f2f1; border: solid #e1dfdd; border-width: 0 1px; gap: 14px; }
.data { width: 181px; background: #f3f2f1; padding: 10px 4px 0 5px; }
.data-head { display: flex; justify-content: space-between; align-items: center; height: 20px; padding: 0 4px 0 4px; }
.data-head h2 { font-size: 14px; font-weight: 600; }
.flip { transform: scaleX(-1); }
.data-search { display: flex; align-items: center; gap: 6px; height: 24px; margin: 15px 0 10px; background: #fff; border: 1px solid #d2d0ce; border-bottom-color: #605e5c; border-radius: 4px; padding-left: 11px; }
.data-search input { min-width: 0; flex: 1; font-size: 12px; }
.data-search input::placeholder { color: #605e5c; opacity: 1; }
.tree { list-style: none; }
.tree li { display: flex; align-items: center; gap: 4px; height: 24px; padding-left: 11px; font-size: 11px; white-space: nowrap; }
.tree li svg + svg { margin-left: 2px; }

.pages { display: flex; height: 35px; background: #f3f2f1; border-bottom: 1px solid #e1dfdd; }
.device { width: 24px; margin: 0 10px; display: flex; justify-content: center; align-items: center; border-bottom: 3px solid transparent; height: 30px; }
.device.on { border-color: #117865; }
.step { width: 20px; justify-content: center; }
.tab { position: relative; padding: 7px 20px 0; font-size: 11px; background: #fff; border-left: 1px solid #b3b0ad; border-bottom: 4px solid #fff; }
.tab.active { font-weight: 700; border-bottom-color: #117865; }
.x { position: absolute; top: 2px; right: 4px; font-size: 10px; }
.add { width: 40px; background: #117865; display: flex; align-items: center; justify-content: center; }

.status { display: flex; align-items: center; justify-content: space-between; background: #f3f2f1; padding: 2px 17px 0 4px; border-bottom: 1px solid #000; font-size: 11px; color: #3b3a39; }
.zoom { display: flex; align-items: center; gap: 5px; }
.zoom .bare { font-size: 13px; }
.pct { margin: 0 15px 0 10px; color: #605e5c; }
.zoom input { appearance: none; width: 100px; height: 12px; background: linear-gradient(#605e5c, #605e5c) 0 6px / 100% 1px no-repeat, linear-gradient(#605e5c, #605e5c) 50% 3px / 1px 7px no-repeat; }
.zoom input::-webkit-slider-thumb { appearance: none; width: 4px; height: 11px; background: #605e5c; }

.taskbar { display: flex; align-items: stretch; color: #fff; background: linear-gradient(90deg, #1f2d3d, #28384a 42%, #46433f 57%, #46433f 76%, #20303f 84%, #1d2b3b); }
.slot { width: 49px; display: flex; align-items: center; justify-content: center; border-bottom: 3px solid transparent; padding-top: 1px; }
.slot.open { background: linear-gradient(#76b9ed, #76b9ed) 50% 100% / 40px 3px no-repeat border-box; }
.slot.focus { background: linear-gradient(#76b9ed, #76b9ed) 50% 100% / 100% 3px no-repeat border-box, #53606b; }
.task-search { width: 287px; display: flex; align-items: center; gap: 10px; padding: 0 4px 0 10px; background: #f3f2f1; border: 1px solid #c8c6c4; color: #1b1b1b; }
.task-search input { flex: 1; min-width: 0; font-size: 14px; }
.task-search input::placeholder { color: #3b3a39; opacity: 1; }
.badge { font: bold 11px "Open Sans", sans-serif; fill: #fff; text-anchor: middle; }
.one { font: 10px "Open Sans", sans-serif; fill: #fff; text-anchor: middle; }
.tray { margin-left: auto; display: flex; align-items: center; gap: 9px; font-size: 12px; line-height: 17px; }
.weather { gap: 6px; font-size: 13px; margin-right: 18px; }
.two { text-align: center; font-size: 11px; }
.two + svg { margin: 0 9px; }
.peek { align-self: stretch; width: 5px; border-left: 1px solid #7b828a; }
```

FILE: charts.js
```js
const months = ["Aug24","Sep24","Oct24","Nov24","Dec24","Jan25","Feb25","Mar25","Apr25","May25","Jun25","Jul25","Aug25","Sep25","Oct25","Nov25","Dec25","Jan26","Feb26","Mar26","Apr26","May26","Jun26","Jul26"];

// "side" places each value label above (-) or below (+) its point.
const series = [
  { name: "planned", start: 0, side: "+-+--+----+++----+--+--+",
    values: [4925,4943,4859,4916,4758,4599,4657,4696,4730,5514,9439,9244,5844,5844,5844,5844,5832,4444,4444,4444,4444,4654,4722,4673] },
  { name: "actual", start: 0, side: "-+-++--+++---",
    values: [3715,5055,4675,5007,4864,3480,3218,3102,4126,3495,3729,55,60] },
  { name: "forecast", start: 13, side: "----------+",
    values: [65,70,75,80,85,90,95,100,2566,3051,2805] }
];

function el(parent, tag, attrs, text) {
  const node = document.createElementNS("http://www.w3.org/2000/svg", tag);
  for (const key in attrs) node.setAttribute(key, attrs[key]);
  if (text !== undefined) node.textContent = text;
  parent.appendChild(node);
  return node;
}

function draw(id, opt) {
  const svg = document.getElementById(id);
  const px = i => 38 + i * 36.1;
  const py = v => opt.zero - v * opt.perK / 1000;

  opt.ticks.forEach(t => {
    el(svg, "line", { class: "gridline", x1: 23, x2: 884, y1: py(t * 1000), y2: py(t * 1000) });
    el(svg, "text", { x: 12, y: py(t * 1000) + 3 }, t + "K");
  });
  const clip = el(svg, "clipPath", { id: id + "clip" });
  el(clip, "rect", { x: 0, y: 0, width: 886, height: opt.zero + 1 });
  const shapes = el(svg, "g", { "clip-path": "url(#" + id + "clip)" });

  series.forEach(s => el(shapes, "polyline", {
    class: "series " + s.name,
    points: s.values.map((v, i) => px(s.start + i) + "," + py(v)).join(" ")
  }));
  series.filter(s => s.name !== opt.plain).forEach(s => s.values.forEach((v, i) =>
    el(shapes, "circle", { class: "dot " + s.name, cx: px(s.start + i), cy: py(v), r: 3 })));

  series.forEach(s => s.values.forEach((v, i) => {
    if (opt.skip.includes(v)) return;
    const gap = s.name === opt.plain ? 11 : 14;
    const x = px(s.start + i);
    const y = py(v) + (s.side[i] === "+" ? gap : -gap);
    const w = { 2: 20, 3: 24, 4: 29 }[String(v).length];
    el(svg, "rect", { class: "pill " + s.name, x: x - w / 2, y: y - 6.5, width: w, height: 13, rx: 2 });
    el(svg, "text", { x: x, y: y + 3 }, v);
  }));
  months.forEach((m, i) => el(svg, "text", { x: px(i), y: opt.zero + 11 }, m));
  el(svg, "text", { class: "axis", x: 453, y: opt.zero + 22 }, "MonthYear");
}

draw("plotA", { zero: 83, perK: 7.5, ticks: [2, 4, 6, 8], plain: "forecast", skip: [85, 100] });
draw("plotB", { zero: 104, perK: 9.6, ticks: [0, 5], plain: "actual", skip: [] });
```
